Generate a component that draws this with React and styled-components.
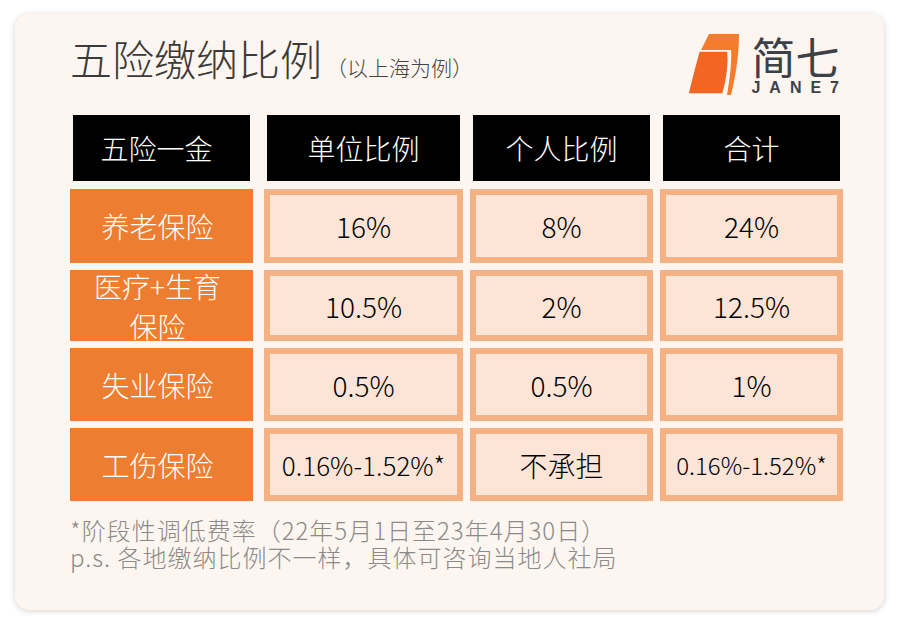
import React from 'react'
import styled, { createGlobalStyle } from 'styled-components'

const GlobalStyle = createGlobalStyle`
  html, body {
    margin: 0;
    padding: 0;
    background: #ffffff;
  }
  body {
    font-family: "Noto Sans CJK SC", "Noto Sans", sans-serif;
    font-weight: 300;
  }
`

const Page = styled.div`
  width: 899px;
  height: 624px;
  box-sizing: border-box;
  padding: 14px 15px;
`

const Card = styled.div`
  width: 869px;
  height: 596px;
  box-sizing: border-box;
  padding-left: 55px;
  background: #fdf6f0;
  border-radius: 14px;
  box-shadow: 0 1px 6px rgba(0, 0, 0, 0.18);
`

const Header = styled.div`
  display: flex;
  justify-content: space-between;
  align-items: flex-start;
  height: 101px;
  padding-right: 36px;
`

const TitleRow = styled.div`
  display: flex;
  align-items: baseline;
  margin-top: 19px;
`

const Title = styled.h1`
  margin: 0;
  font-size: 42px;
  line-height: 50px;
  font-weight: 300;
  color: #3a3a3a;
`

const SubTitle = styled.span`
  margin-left: 4px;
  font-size: 21px;
  color: #444444;
`

const Logo = styled.div`
  display: flex;
  align-items: flex-start;
  gap: 4px;
  margin-top: 14px;
`

const LogoText = styled.div`
  display: flex;
  flex-direction: column;
  margin-top: 6px;
`

const LogoName = styled.span`
  font-size: 44px;
  line-height: 44px;
  font-weight: 400;
  color: #3c4148;
`

const LogoLatin = styled.span`
  margin-top: 2px;
  font-family: "Liberation Sans", Arial, sans-serif;
  font-size: 16px;
  line-height: 16px;
  font-weight: 700;
  letter-spacing: 9px;
  color: #3c4148;
`

const Table = styled.div`
  display: grid;
  grid-template-columns: 187px 199px 183px 183px;
  grid-template-rows: 67px 74px 71px 73px 73px;
  column-gap: 7px;
  row-gap: 7px;
`

const HeadCell = styled.div`
  height: 66px;
  box-sizing: border-box;
  margin: ${(p) => (p.$first ? '0 7px 0 3px' : '0 3px')};
  padding-right: ${(p) => (p.$first ? '10px' : '0')};
  display: flex;
  align-items: center;
  justify-content: center;
  background: #000000;
  color: #ffffff;
  font-size: 28px;
`

const LabelCell = styled.div`
  width: 183px;
  box-sizing: border-box;
  padding-right: 8px;
  display: flex;
  align-items: center;
  justify-content: center;
  text-align: center;
  background: #ed7d31;
  color: #ffffff;
  font-size: 28px;
  line-height: 40px;
`

const DataCell = styled.div`
  box-sizing: border-box;
  display: flex;
  align-items: center;
  justify-content: center;
  border: 6px solid #f4b183;
  background: #fce4d6;
  color: #000000;
  font-size: ${(p) => p.$size || 28}px;
  white-space: nowrap;
`

const Notes = styled.div`
  margin-top: 15px;
  font-size: 24px;
  line-height: 27px;
  letter-spacing: 1px;
  color: #8a8a8a;
`

const LogoMark = () => (
  <svg width="60" height="70" viewBox="0 0 60 70">
    <path d="M22 6 L52 6 C52 30 48 50 44 67 L40 67 C43 50 45 32 44 22 L14 22 Z" fill="#f47c2c" />
    <path
      d="M12 23 L41 23 C42 35 40 52 36 66 L1 66 C4 52 8 38 12 23 Z"
      fill="#f26522"
      stroke="#fdf6f0"
      strokeWidth="1.5"
    />
  </svg>
)

const heads = ['五险一金', '单位比例', '个人比例', '合计']

const rows = [
  { label: '养老保险', values: ['16%', '8%', '24%'] },
  { label: ['医疗+生育', '保险'], values: ['10.5%', '2%', '12.5%'] },
  { label: '失业保险', values: ['0.5%', '0.5%', '1%'] },
  { label: '工伤保险', values: ['0.16%-1.52%*', '不承担', '0.16%-1.52%*'], sizes: [26, 28, 24] }
]

const App = () => (
  <Page>
    <GlobalStyle />
    <Card>
      <Header>
        <TitleRow>
          <Title>五险缴纳比例</Title>
          <SubTitle>（以上海为例）</SubTitle>
        </TitleRow>
        <Logo>
          <LogoMark />
          <LogoText>
            <LogoName>简七</LogoName>
            <LogoLatin>JANE7</LogoLatin>
          </LogoText>
        </Logo>
      </Header>

      <Table>
        {heads.map((h, i) => (
          <HeadCell key={h} $first={i === 0}>
            {h}
          </HeadCell>
        ))}
        {rows.map((row, r) => (
          <React.Fragment key={r}>
            <LabelCell>
              {Array.isArray(row.label) ? (
                <span>
                  {row.label[0]}
                  <br />
                  {row.label[1]}
                </span>
              ) : (
                row.label
              )}
            </LabelCell>
            {row.values.map((v, c) => (
              <DataCell key={c} $size={row.sizes && row.sizes[c]}>
                {v}
              </DataCell>
            ))}
          </React.Fragment>
        ))}
      </Table>

      <Notes>
        *阶段性调低费率（22年5月1日至23年4月30日）
        <br />
        p.s. 各地缴纳比例不一样，具体可咨询当地人社局
      </Notes>
    </Card>
  </Page>
)

export default App
